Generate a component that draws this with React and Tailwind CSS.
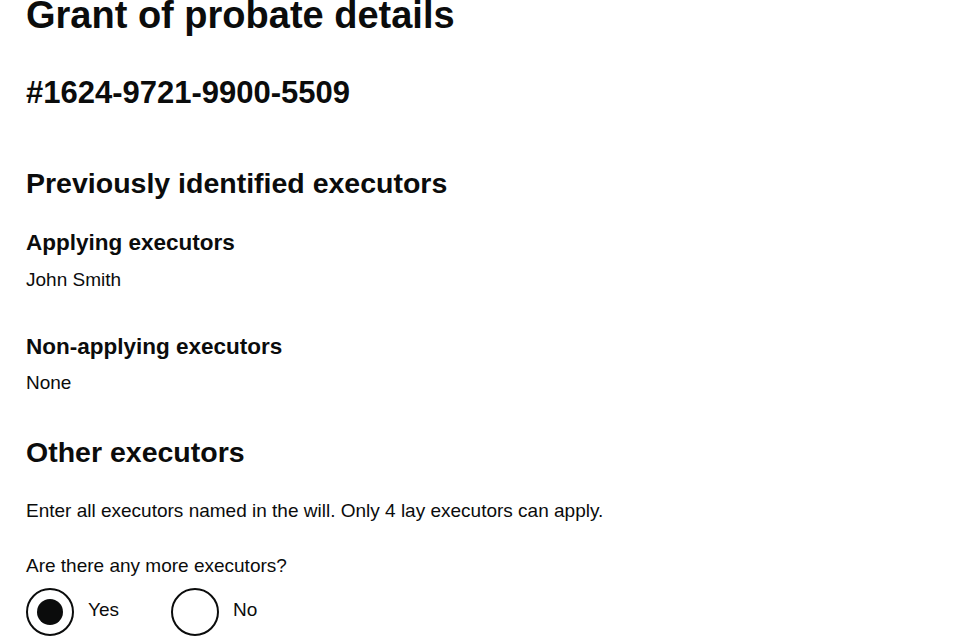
import { useState } from 'react';

const font = { fontFamily: '"Liberation Sans", Arial, sans-serif' };

function Radio({ label, checked, onSelect }) {
  return (
    <label className="flex items-center gap-[14px] cursor-pointer" onClick={onSelect}>
      <span className="w-12 h-12 rounded-full border-2 border-[#0b0c0c] flex items-center justify-center bg-white">
        {checked && <span className="w-[26px] h-[26px] rounded-full bg-[#0b0c0c]" />}
      </span>
      <span className="text-[19px] leading-[24px] pb-1">{label}</span>
    </label>
  );
}

export default function App() {
  const [more, setMore] = useState('yes');

  return (
    <div className="min-h-screen bg-white text-[#0b0c0c] px-[26px] overflow-hidden" style={font}>
      <h1 className="text-[38px] leading-[30px] font-bold">Grant of probate details</h1>
      <p className="text-[31px] leading-[36px] font-bold mt-[45px]">#1624-9721-9900-5509</p>

      <h2 className="text-[28.5px] leading-[32px] font-bold mt-[56px]">Previously identified executors</h2>

      <h3 className="text-[22.5px] leading-[26px] font-bold mt-[31px]">Applying executors</h3>
      <p className="text-[19px] leading-[24px] mt-[12px]">John Smith</p>

      <h3 className="text-[22.5px] leading-[26px] font-bold mt-[42px]">Non-applying executors</h3>
      <p className="text-[19px] leading-[24px] mt-[11px]">None</p>

      <h2 className="text-[28.5px] leading-[32px] font-bold mt-[41px]">Other executors</h2>
      <p className="text-[19px] leading-[24px] mt-[31px]">
        Enter all executors named in the will. Only 4 lay executors can apply.
      </p>

      <fieldset className="mt-[31px]">
        <legend className="text-[19px] leading-[24px]">Are there any more executors?</legend>
        <div className="flex items-center gap-[52px] mt-[10px]">
          <Radio label="Yes" checked={more === 'yes'} onSelect={() => setMore('yes')} />
          <Radio label="No" checked={more === 'no'} onSelect={() => setMore('no')} />
        </div>
      </fieldset>
    </div>
  );
}
